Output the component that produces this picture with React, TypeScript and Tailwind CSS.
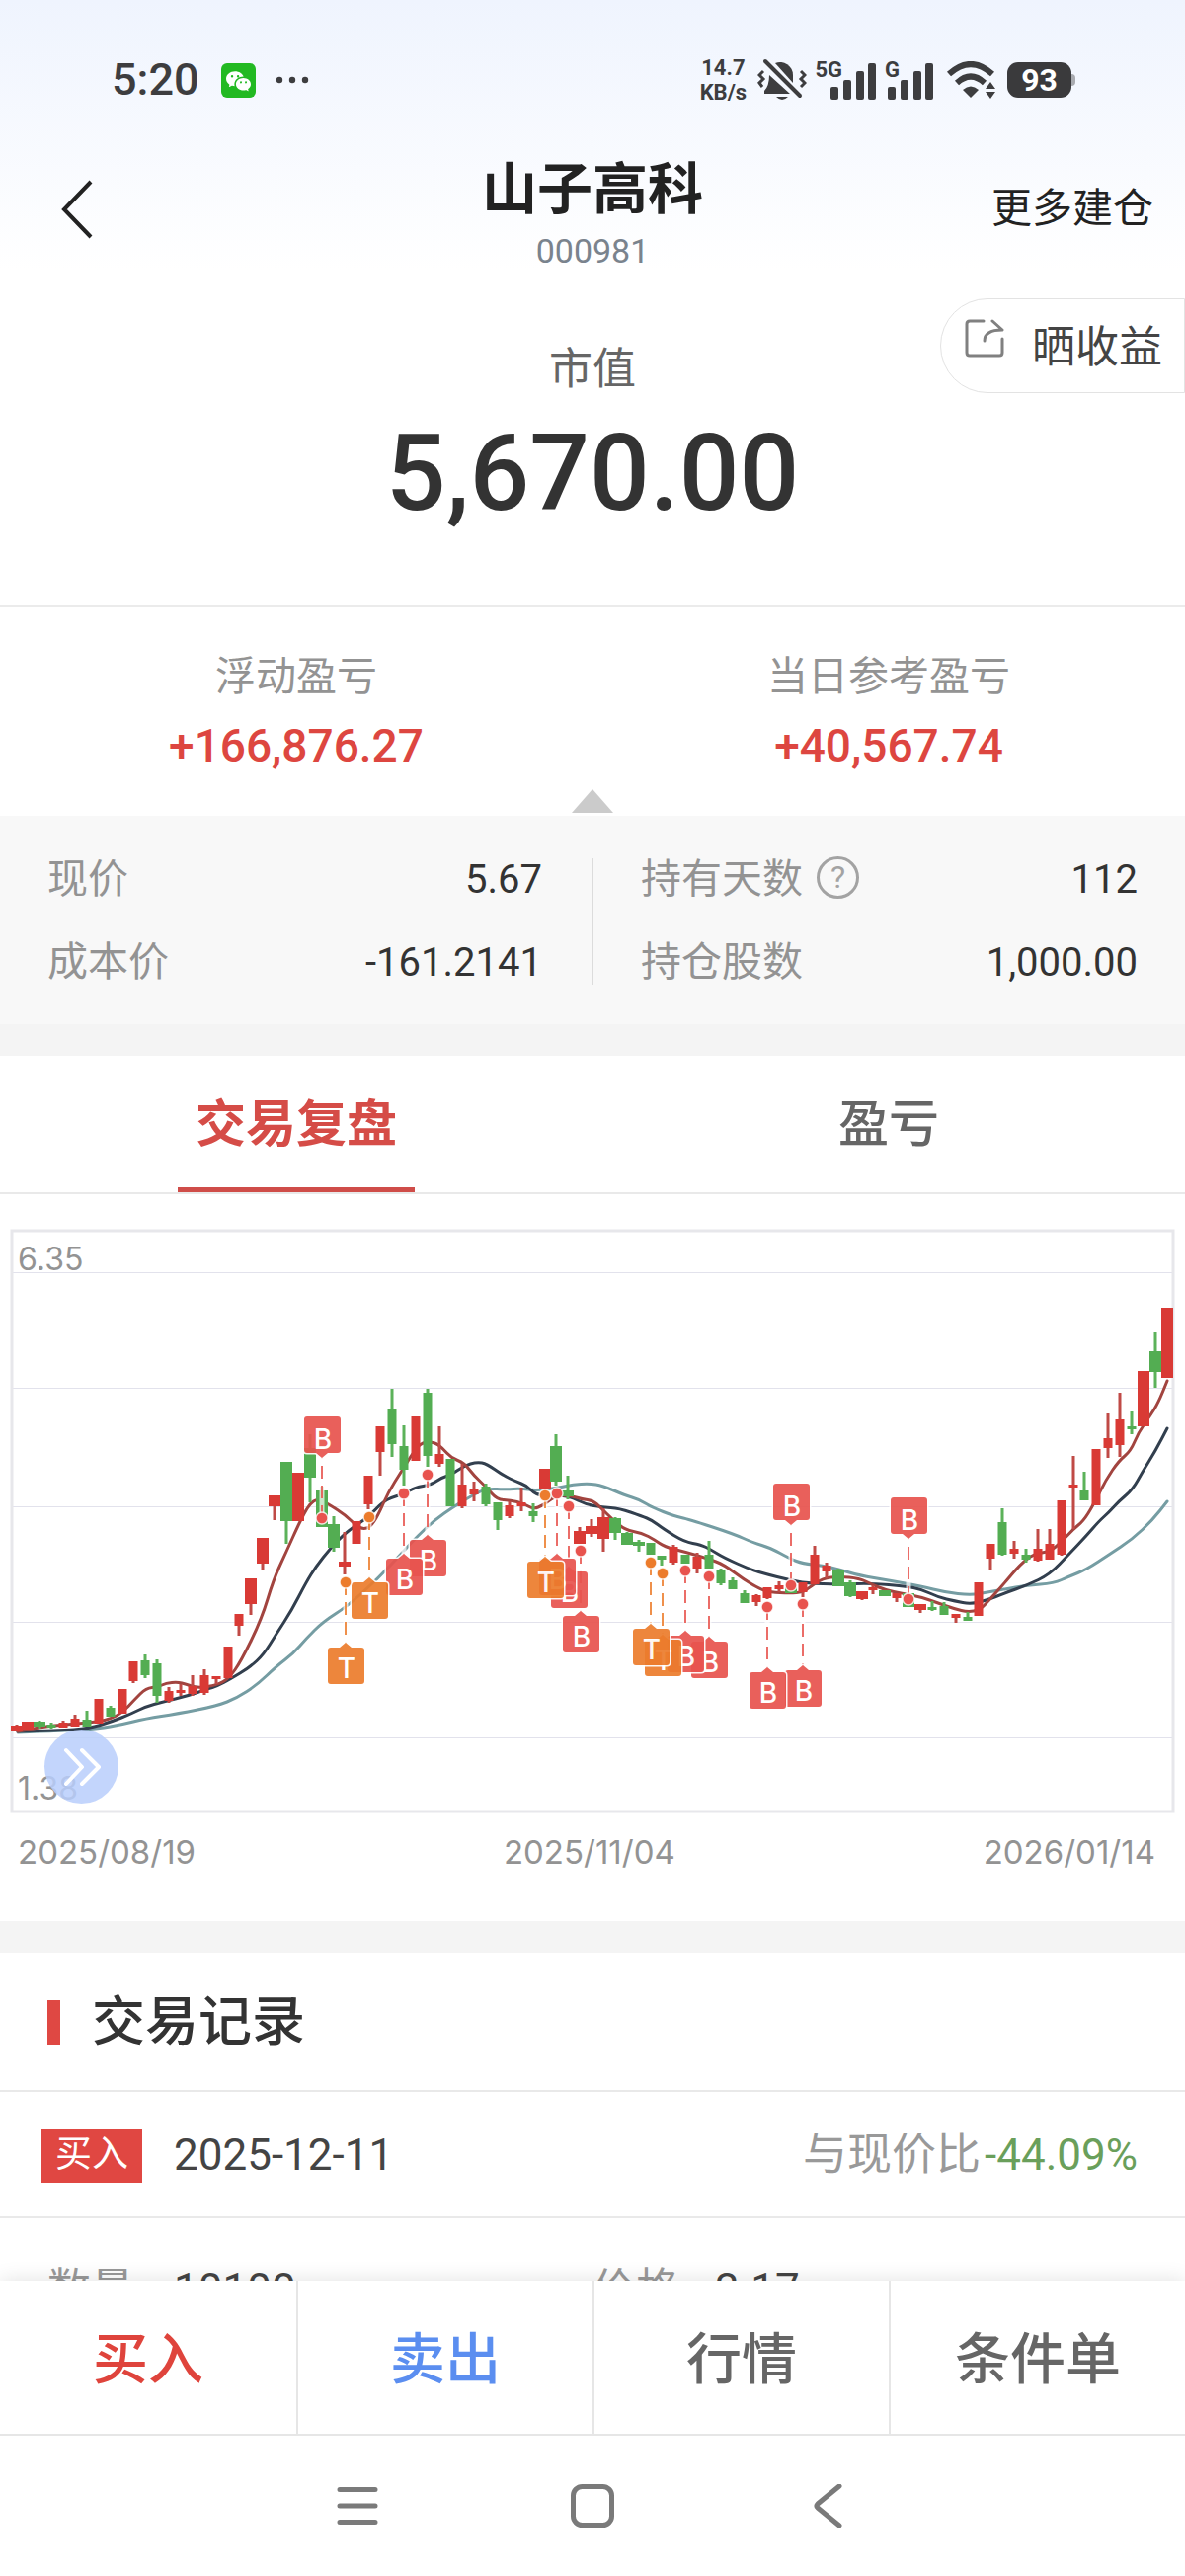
import React, { useState } from 'react'
import clsx from 'clsx'
import { BsWechat } from 'react-icons/bs'

type Color = 'r' | 'g'
// color, high, low, body top, body bottom, wide body
type Candle = [Color, number, number, number, number, 1?]
type Point = [number, number]

const candles: Candle[] = [
  ['r', 1745, 1752, 1746, 1751, 1],
  ['r', 1742, 1750, 1742, 1750, 1],
  ['g', 1741, 1749, 1742, 1747, 1],
  ['g', 1743, 1749, 1745, 1748],
  ['r', 1741, 1748, 1743, 1748],
  ['r', 1735, 1747, 1739, 1747],
  ['g', 1731, 1747, 1740, 1747],
  ['r', 1719, 1744, 1719, 1744],
  ['g', 1726, 1737, 1728, 1737],
  ['r', 1709, 1734, 1709, 1734],
  ['r', 1681, 1703, 1681, 1701],
  ['g', 1674, 1698, 1680, 1695],
  ['g', 1679, 1723, 1683, 1716],
  ['r', 1707, 1723, 1711, 1721],
  ['r', 1704, 1716, 1710, 1713],
  ['r', 1695, 1716, 1706, 1714],
  ['r', 1689, 1715, 1695, 1713],
  ['r', 1696, 1704, 1696, 1699],
  ['r', 1666, 1698, 1666, 1698],
  ['r', 1633, 1655, 1633, 1645],
  ['r', 1597, 1634, 1597, 1623, 1],
  ['r', 1556, 1589, 1556, 1582, 1],
  ['r', 1513, 1538, 1513, 1524, 1],
  ['g', 1479, 1562, 1479, 1539, 1],
  ['r', 1490, 1539, 1490, 1539, 1],
  ['g', 1451, 1520, 1465, 1495, 1],
  ['g', 1504, 1545, 1508, 1545, 1],
  ['g', 1534, 1570, 1542, 1566, 1],
  ['r', 1550, 1593, 1580, 1585, 1],
  ['r', 1539, 1562, 1539, 1562],
  ['r', 1493, 1527, 1493, 1522],
  ['r', 1443, 1493, 1443, 1469],
  ['g', 1405, 1474, 1425, 1461],
  ['g', 1442, 1503, 1463, 1487],
  ['r', 1433, 1478, 1433, 1478],
  ['g', 1405, 1484, 1409, 1473],
  ['r', 1443, 1484, 1471, 1481],
  ['g', 1476, 1524, 1476, 1524],
  ['r', 1481, 1526, 1502, 1524],
  ['r', 1499, 1519, 1506, 1512],
  ['g', 1501, 1524, 1504, 1522],
  ['g', 1520, 1548, 1520, 1538],
  ['r', 1519, 1536, 1523, 1534],
  ['r', 1505, 1529, 1520, 1524],
  ['g', 1521, 1540, 1529, 1534],
  ['r', 1486, 1507, 1486, 1507, 1],
  ['g', 1451, 1503, 1463, 1499, 1],
  ['g', 1493, 1517, 1508, 1514, 1],
  ['r', 1545, 1562, 1549, 1562, 1],
  ['r', 1537, 1555, 1544, 1552, 1],
  ['r', 1526, 1570, 1535, 1557, 1],
  ['g', 1535, 1558, 1536, 1551, 1],
  ['g', 1550, 1563, 1551, 1563, 1],
  ['g', 1558, 1570, 1560, 1564, 1],
  ['g', 1561, 1573, 1561, 1573],
  ['g', 1574, 1584, 1574, 1578],
  ['r', 1563, 1583, 1565, 1581],
  ['g', 1573, 1582, 1573, 1582],
  ['r', 1571, 1592, 1575, 1587],
  ['g', 1559, 1587, 1573, 1587],
  ['g', 1587, 1604, 1588, 1602],
  ['g', 1596, 1608, 1599, 1608],
  ['g', 1609, 1622, 1612, 1622],
  ['r', 1613, 1625, 1614, 1621],
  ['r', 1606, 1618, 1606, 1617],
  ['r', 1600, 1611, 1604, 1608],
  ['g', 1604, 1612, 1606, 1612, 1],
  ['r', 1601, 1616, 1601, 1611],
  ['r', 1564, 1603, 1573, 1603],
  ['r', 1581, 1597, 1584, 1590],
  ['g', 1587, 1605, 1588, 1605, 1],
  ['g', 1599, 1616, 1601, 1615, 1],
  ['r', 1610, 1619, 1610, 1618, 1],
  ['r', 1604, 1613, 1606, 1609],
  ['g', 1609, 1615, 1609, 1615, 1],
  ['r', 1612, 1621, 1612, 1617],
  ['g', 1612, 1626, 1612, 1626, 1],
  ['r', 1623, 1632, 1623, 1629, 1],
  ['g', 1620, 1630, 1626, 1629],
  ['g', 1621, 1634, 1625, 1634],
  ['r', 1633, 1642, 1633, 1637],
  ['g', 1631, 1640, 1636, 1640],
  ['r', 1601, 1635, 1601, 1635],
  ['r', 1562, 1588, 1562, 1577],
  ['g', 1526, 1574, 1540, 1573],
  ['r', 1559, 1577, 1567, 1572],
  ['g', 1567, 1581, 1573, 1578],
  ['r', 1547, 1580, 1567, 1579],
  ['r', 1547, 1578, 1562, 1578],
  ['r', 1518, 1574, 1518, 1573],
  ['r', 1473, 1547, 1502, 1505],
  ['g', 1489, 1518, 1508, 1518],
  ['r', 1466, 1523, 1466, 1523],
  ['r', 1430, 1475, 1455, 1465],
  ['r', 1409, 1474, 1436, 1462],
  ['g', 1428, 1451, 1443, 1446],
  ['r', 1387, 1443, 1387, 1443, 1],
  ['g', 1348, 1404, 1367, 1388, 1],
  ['r', 1323, 1394, 1323, 1394, 1],
]

const ma5: Point[] = [
  [18, 1752], [43, 1747], [67, 1745], [100, 1742], [112, 1739], [124, 1733],
  [136, 1720], [148, 1708], [160, 1707], [168, 1703], [180, 1702], [188, 1704],
  [200, 1708], [220, 1705], [232, 1698], [244, 1681], [265, 1638], [277, 1598],
  [290, 1570], [303, 1541], [313, 1522], [322, 1516], [333, 1522], [350, 1533],
  [361, 1544], [368, 1547], [375, 1545], [383, 1533], [393, 1510], [407, 1488],
  [420, 1467], [428, 1459], [440, 1459], [448, 1465], [457, 1475], [470, 1480],
  [480, 1493], [493, 1505], [503, 1517], [517, 1518], [530, 1521], [540, 1527],
  [550, 1523], [563, 1513], [577, 1513], [590, 1517], [600, 1518], [608, 1525],
  [620, 1537], [633, 1548], [650, 1551], [663, 1558], [673, 1565], [693, 1570],
  [717, 1577], [733, 1583], [753, 1598], [770, 1608], [780, 1611], [800, 1612],
  [813, 1611], [820, 1606], [833, 1597], [850, 1595], [870, 1597], [883, 1603],
  [897, 1609], [913, 1612], [933, 1616], [950, 1622], [967, 1628], [980, 1631],
  [992, 1629], [1000, 1621], [1017, 1602], [1033, 1583], [1047, 1572],
  [1063, 1570], [1075, 1560], [1087, 1547], [1097, 1539], [1107, 1523],
  [1120, 1497], [1133, 1478], [1145, 1468], [1153, 1449], [1165, 1432],
  [1173, 1419], [1182, 1397],
]

const ma10: Point[] = [
  [18, 1752], [60, 1751], [90, 1749], [113, 1742], [133, 1734], [147, 1727],
  [165, 1722], [190, 1716], [210, 1709], [220, 1706], [233, 1699], [253, 1687],
  [267, 1674], [280, 1653], [295, 1630], [310, 1601], [320, 1585], [335, 1566],
  [350, 1551], [361, 1543], [374, 1534], [387, 1520], [397, 1515], [410, 1511],
  [420, 1505], [437, 1502], [447, 1495], [457, 1492], [470, 1483], [483, 1479],
  [493, 1481], [510, 1493], [523, 1499], [533, 1503], [540, 1510], [547, 1513],
  [563, 1513], [577, 1514], [593, 1522], [610, 1525], [627, 1526], [650, 1534],
  [660, 1538], [672, 1547], [693, 1560], [710, 1563], [720, 1568], [733, 1576],
  [760, 1588], [777, 1593], [797, 1598], [817, 1602], [850, 1603], [883, 1602],
  [917, 1605], [933, 1608], [950, 1616], [967, 1620], [983, 1623], [1000, 1619],
  [1017, 1612], [1040, 1604], [1063, 1593], [1083, 1572], [1100, 1554],
  [1113, 1539], [1123, 1530], [1133, 1519], [1147, 1507], [1157, 1489],
  [1170, 1468], [1182, 1445],
]

const ma20: Point[] = [
  [18, 1753], [67, 1751], [100, 1749], [123, 1745], [147, 1739], [180, 1734],
  [220, 1726], [240, 1718], [260, 1705], [280, 1686], [297, 1673], [310, 1658],
  [327, 1641], [352, 1625], [383, 1597], [410, 1568], [423, 1554], [440, 1538],
  [460, 1524], [480, 1512], [493, 1506], [513, 1507], [527, 1506], [543, 1508],
  [567, 1505], [580, 1502], [597, 1501], [610, 1503], [633, 1513], [647, 1517],
  [660, 1525], [683, 1534], [697, 1537], [743, 1552], [763, 1561], [780, 1566],
  [800, 1577], [813, 1582], [833, 1584], [850, 1588], [870, 1594], [900, 1599],
  [933, 1605], [957, 1611], [983, 1614], [1000, 1611], [1017, 1608],
  [1040, 1604], [1067, 1602], [1083, 1595], [1100, 1588], [1123, 1573],
  [1147, 1557], [1167, 1538], [1182, 1519],
]

// side: where the tag sits relative to its price dot
const marks: { type: 'B' | 'T'; x: number; dot: number; box: number; side: 'above' | 'below' }[] = [
  { type: 'B', x: 326, dot: 1536, box: 1433, side: 'above' },
  { type: 'T', x: 350, dot: 1601, box: 1667, side: 'below' },
  { type: 'T', x: 374, dot: 1535, box: 1601, side: 'below' },
  { type: 'B', x: 409, dot: 1511, box: 1577, side: 'below' },
  { type: 'B', x: 433, dot: 1492, box: 1558, side: 'below' },
  { type: 'T', x: 552, dot: 1513, box: 1580, side: 'below' },
  { type: 'B', x: 564, dot: 1511, box: 1577, side: 'below' },
  { type: 'B', x: 576, dot: 1524, box: 1590, side: 'below' },
  { type: 'B', x: 588, dot: 1569, box: 1635, side: 'below' },
  { type: 'T', x: 659, dot: 1581, box: 1648, side: 'below' },
  { type: 'T', x: 671, dot: 1592, box: 1659, side: 'below' },
  { type: 'B', x: 694, dot: 1589, box: 1655, side: 'below' },
  { type: 'B', x: 718, dot: 1595, box: 1661, side: 'below' },
  { type: 'B', x: 777, dot: 1626, box: 1692, side: 'below' },
  { type: 'B', x: 801, dot: 1604, box: 1501, side: 'above' },
  { type: 'B', x: 813, dot: 1623, box: 1690, side: 'below' },
  { type: 'B', x: 920, dot: 1618, box: 1515, side: 'above' },
]

const candleX = (i: number) => Math.round(16.5 + i * 11.89)
const fill = { r: '#d93a35', g: '#53ad52' }
const stroke = { r: '#c04a46', g: '#5cb25a' }

const smooth = (points: Point[]) => {
  const last = points[points.length - 1]
  const mid = points.slice(1, -1).map(([x, y], i) => {
    const next = points[i + 2]
    return `Q${x} ${y} ${(x + next[0]) / 2} ${(y + next[1]) / 2}`
  })
  return `M${points[0][0]} ${points[0][1]} ${mid.join(' ')} L${last[0]} ${last[1]}`
}

const KLineChart = () => (
  <svg viewBox="0 1208 1200 640" className="block w-full" role="img" aria-label="K线">
    {[1287, 1404, 1524, 1641, 1758].map((y) => (
      <line key={y} x1="12" x2="1188" y1={y + 0.5} y2={y + 0.5} stroke="#e2e2ec" />
    ))}
    <rect x="12" y="1245" width="1176" height="588" fill="none" stroke="#e7e7eb" strokeWidth="3" />
    <g fontFamily="Inter, sans-serif" fontSize="32" fill="#939393">
      <text x="18" y="1285">6.35</text>
      <text x="18" y="1821">1.38</text>
    </g>
    <g fill="none" strokeWidth="3" strokeLinecap="round">
      <path d={smooth(ma20)} stroke="#759da3" />
      <path d={smooth(ma10)} stroke="#323f4e" />
      <path d={smooth(ma5)} stroke="#a2443f" />
    </g>
    {candles.map(([c, high, low, top, bottom, wide], i) => {
      const x = candleX(i)
      const w = wide ? 12 : 9
      return (
        <g key={i}>
          <rect x={x - 1.5} y={high} width="3" height={low - high} fill={stroke[c]} />
          <rect x={x - w / 2} y={top} width={w} height={bottom - top} fill={fill[c]} />
        </g>
      )
    })}
    {[...marks].reverse().map(({ type, x, dot, box, side }) => {
      const color = type === 'B' ? '#e8534e' : '#ec7c2c'
      const below = side === 'below'
      const edge = below ? box - 4 : box + 42
      const base = below ? box : box + 37
      return (
        <g key={x}>
          <line x1={x} x2={x} y1={dot} y2={edge} stroke="#fff" strokeOpacity="0.7" strokeWidth="5" />
          <line
            x1={x}
            x2={x}
            y1={dot}
            y2={edge}
            stroke={color}
            strokeOpacity="0.85"
            strokeWidth="2"
            strokeDasharray="13 7"
          />
          <g opacity="0.92">
            <path
              d={`M${x - 15} ${box}H${x - 6}${below ? `L${x} ${box - 5}L${x + 6} ${box}` : ''}H${x + 16}q3 0 3 3V${box + 34}q0 3 -3 3H${x + 6}${
                below ? '' : `L${x} ${base + 5}L${x - 6} ${base}`
              }H${x - 15}q-3 0 -3 -3V${box + 3}q0 -3 3 -3Z`}
              fill={color}
              stroke="#fff"
              strokeWidth="3"
              paintOrder="stroke"
            />
            <text
              x={x + 1}
              y={below ? box + 31 : box + 33}
              fontFamily="Inter, sans-serif"
              fontSize="28"
              fontWeight="500"
              fill="#fff"
              textAnchor="middle"
            >
              {type}
            </text>
          </g>
          <circle cx={x} cy={dot} r="6" fill={color} stroke="#fff" strokeOpacity="0.8" strokeWidth="1.5" />
        </g>
      )
    })}
  </svg>
)

const Signal = ({ label }: { label: string }) => (
  <div className="flex h-10 items-end">
    <span className="self-start text-[22px] leading-5 font-bold">{label}</span>
    <svg viewBox="0 0 47 37" className="-ml-3 h-[37px] w-[47px] fill-current">
      <rect x="0" y="24" width="8" height="13" rx="2" />
      <rect x="13" y="17" width="8" height="20" rx="2" />
      <rect x="26" y="8" width="8" height="29" rx="2" />
      <rect x="38" y="0" width="8" height="37" rx="2" />
    </svg>
  </div>
)

const StatusBar = () => (
  <div className="flex h-[162px] items-center justify-between pr-[111px] pl-[113px] text-[#3d3d3f]">
    <div className="flex items-center">
      <span className="text-[45px] font-medium">5:20</span>
      <span className="ml-[22px] flex h-[35px] w-[35px] items-center justify-center rounded-md bg-[#22b922] text-white">
        <BsWechat className="h-[25px] w-[25px]" />
      </span>
      <svg viewBox="0 0 34 8" className="ml-5 h-2 w-[34px] fill-current">
        <circle cx="4" cy="4" r="3.2" />
        <circle cx="17" cy="4" r="3.2" />
        <circle cx="30" cy="4" r="3.2" />
      </svg>
    </div>
    <div className="flex items-center">
      <div className="w-[50px] text-center text-[22px] leading-[25px] font-bold">
        <div>14.7</div>
        <div>KB/s</div>
      </div>
      <svg viewBox="0 0 50 44" className="mr-2 ml-2.5 h-11 w-[50px] fill-current">
        <path d="M18 5a13 13 0 0 1 18 12v8Z" />
        <path d="M12 17 33 36H7v-3q5-5 5-16Z" />
        <path d="M19 39h12q-6 6-12 0Z" />
        <path d="M8 3 43 38" stroke="currentColor" strokeWidth="4" strokeLinecap="round" />
        <path
          d="M6 13l-4 4 4 4-4 4 3 4M44 13l4 4-4 4 4 4-4 4"
          fill="none"
          stroke="currentColor"
          strokeWidth="3"
        />
      </svg>
      <Signal label="5G" />
      <div className="ml-2">
        <Signal label="G" />
      </div>
      <svg viewBox="0 0 52 38" className="ml-3 h-[38px] w-[52px] fill-current">
        <g fill="none" stroke="currentColor" strokeWidth="6">
          <path d="M3 13Q25-7 47 13" />
          <path d="M11 22Q25 9 39 22" />
        </g>
        <path d="M17 29Q25 22 33 29L25 37Z" />
        <path d="M40 28l5-7 5 7ZM40 31h10l-5 7Z" />
      </svg>
      <span className="ml-2.5 flex h-9 w-[65px] items-center justify-center rounded-[11px] bg-[#3a3a3c] text-[32px] font-bold text-white">
        93
      </span>
      <span className="h-3 w-1 rounded-r bg-[#a9abb0]" />
    </div>
  </div>
)

const Header = () => (
  <header className="grid grid-cols-[1fr_auto_1fr] items-start">
    <button aria-label="返回" className="flex h-[100px] items-center pl-[60px]">
      <svg viewBox="0 0 36 60" className="h-[60px] w-9" fill="none" stroke="#222" strokeWidth="4">
        <path d="M32 2 5 30l27 28" />
      </svg>
    </button>
    <div className="text-center">
      <h1 className="text-[56px] leading-[60px] font-bold text-[#222]">山子高科</h1>
      <p className="mt-3 text-[34px] leading-10 text-[#7a838d]">000981</p>
    </div>
    <button className="flex h-[100px] items-center justify-end pr-8 text-[41px] text-[#222]">更多建仓</button>
  </header>
)

const MarketValue = () => (
  <section className="relative border-b-2 border-[#ebebeb] pt-[78px] pb-[83px] text-center">
    <h2 className="text-[44px] leading-[44px] text-[#666]">市值</h2>
    <p className="mt-[34px] text-[107px] leading-[100px] font-medium text-[#333]">5,670.00</p>
    <button className="absolute top-7 right-0 flex h-24 items-center rounded-l-full border border-[#e3e3e3] bg-white pt-1 pr-[22px] pl-6 text-[44px] text-[#444]">
      <svg
        viewBox="0 0 40 40"
        className="mr-7 mb-5 h-10 w-10"
        fill="none"
        stroke="#808080"
        strokeWidth="3"
        strokeLinecap="round"
        strokeLinejoin="round"
      >
        <path d="M19 3H5Q2 3 2 6V35q0 3 3 3H35q3 0 3-3V21" />
        <path d="M28 3 38 12Q20 12 20 23" />
      </svg>
      晒收益
    </button>
  </section>
)

const Summary = () => (
  <section className="relative grid grid-cols-2 pt-[45px] pb-[46px] text-center">
    {[
      ['浮动盈亏', '+166,876.27'],
      ['当日参考盈亏', '+40,567.74'],
    ].map(([label, value]) => (
      <div key={label}>
        <h3 className="text-[41px] leading-[50px] text-[#939393]">{label}</h3>
        <p className="mt-5 text-[46px] leading-[50px] font-medium text-[#dd4640]">{value}</p>
      </div>
    ))}
    <svg viewBox="0 0 42 24" className="absolute bottom-[3px] left-1/2 h-6 w-[42px] -translate-x-1/2 fill-[#cbcbcb]">
      <path d="M21 0 42 24H0Z" />
    </svg>
  </section>
)

const StatRow = ({ label, value, help }: { label: string; value: string; help?: boolean }) => (
  <div className="flex h-[60px] items-center justify-between text-[40px]">
    <dt className="flex items-center text-[41px] text-[#939393]">
      {label}
      {help && (
        <button
          aria-label="持有天数说明"
          className="mb-1.5 ml-3.5 flex h-[43px] w-[43px] items-center justify-center rounded-full border-3 border-[#a3a3a3] text-[32px] text-[#a3a3a3]"
        >
          ?
        </button>
      )}
    </dt>
    <dd className="text-[#333]">{value}</dd>
  </div>
)

const Stats = () => (
  <section className="grid grid-cols-[1fr_2px_1fr] border-b-32 border-[#f4f4f4] bg-[#f8f8f8] pt-[35px] pb-8">
    <dl className="flex flex-col gap-6 pr-[50px] pl-12">
      <StatRow label="现价" value="5.67" />
      <StatRow label="成本价" value="-161.2141" />
    </dl>
    <div className="my-2 bg-[#dcdcdc]" />
    <dl className="flex flex-col gap-6 pr-12 pl-12">
      <StatRow label="持有天数" value="112" help />
      <StatRow label="持仓股数" value="1,000.00" />
    </dl>
  </section>
)

const Tabs = () => {
  const [active, setActive] = useState('交易复盘')
  return (
    <div role="tablist" className="grid h-[140px] grid-cols-2 border-b-2 border-[#e9e9e9]">
      {['交易复盘', '盈亏'].map((tab) => (
        <button
          key={tab}
          role="tab"
          aria-selected={tab === active}
          onClick={() => setActive(tab)}
          className={clsx(
            'flex flex-col items-center text-[51px]',
            tab === active ? 'font-bold text-[#d54c47]' : 'font-medium text-[#666]'
          )}
        >
          <span className="flex flex-1 items-center pt-2">{tab}</span>
          <span className={clsx('h-[5px] w-60', tab === active && 'bg-[#cf4d49]')} />
        </button>
      ))}
    </div>
  )
}

const Records = () => (
  <section>
    <h2 className="flex h-[141px] items-center border-b-2 border-[#e9e9e9] pt-0.5 pl-12 text-[54px] font-medium text-[#333]">
      <span className="mr-8 h-[45px] w-[13px] bg-[#df4843]" />
      交易记录
    </h2>
    <div className="flex h-32 items-center border-b-2 border-[#e9e9e9] pt-0.5 pr-12 pl-[42px] text-[44px]">
      <span className="flex h-[55px] w-[102px] items-center justify-center bg-[#e04742] text-[37px] text-white">
        买入
      </span>
      <time className="ml-8 text-[#444]">2025-12-11</time>
      <span className="ml-auto flex items-center gap-1 text-[#999]">
        <span className="text-[45px]">与现价比</span>
        <span className="text-[#6a9f5b]">-44.09%</span>
      </span>
    </div>
    <dl className="grid h-36 grid-cols-2 items-center text-[44px]">
      <div className="flex pl-12">
        <dt className="mr-10 text-[#999]">数量</dt>
        <dd className="text-[#444]">10100</dd>
      </div>
      <div className="flex">
        <dt className="mr-9 text-[#999]">价格</dt>
        <dd className="text-[#444]">3.17</dd>
      </div>
    </dl>
  </section>
)

const actions = [
  { name: '买入', color: 'text-[#df443c]' },
  { name: '卖出', color: 'text-[#5b8ef0]' },
  { name: '行情', color: 'text-[#666]' },
  { name: '条件单', color: 'text-[#666]' },
]

const ActionBar = () => (
  <div className="relative grid h-[157px] shrink-0 grid-cols-4 border-b-2 border-[#e6e6e6] bg-white shadow-[0_0_20px_rgba(0,0,0,0.12)]">
    {actions.map(({ name, color }) => (
      <button key={name} className={clsx('border-[#e6e6e6] pt-1 text-[56px] font-medium not-first:border-l-2', color)}>
        {name}
      </button>
    ))}
  </div>
)

const SystemNav = () => (
  <nav className="relative flex h-[142px] shrink-0 items-center justify-center gap-[194px] bg-white text-[#7a7a7a]">
    <button aria-label="最近任务">
      <svg viewBox="0 0 44 44" className="h-11 w-11" stroke="currentColor" strokeWidth="5" strokeLinecap="round">
        <path d="M4 5.500H40M4 22H40M4 38.500H40" />
      </svg>
    </button>
    <button aria-label="主屏幕">
      <svg viewBox="0 0 44 44" className="h-11 w-11" fill="none" stroke="currentColor" strokeWidth="5">
        <rect x="2.500" y="2.500" width="39" height="39" rx="9" />
      </svg>
    </button>
    <button aria-label="返回上一页">
      <svg
        viewBox="0 0 44 44"
        className="h-11 w-11"
        fill="none"
        stroke="currentColor"
        strokeWidth="5"
        strokeLinecap="round"
        strokeLinejoin="round"
      >
        <path d="M34 2 12 20q-2 2 0 4L34 42" />
      </svg>
    </button>
  </nav>
)

export default function App() {
  return (
    <div className="flex h-screen flex-col bg-white font-['Roboto','Noto_Sans_CJK_SC',sans-serif]">
      <main className="min-h-0 flex-1 overflow-y-auto [scrollbar-width:none]">
        <div className="bg-linear-to-b from-[#eff4fe] to-white">
          <StatusBar />
          <Header />
        </div>
        <MarketValue />
        <Summary />
        <Stats />
        <Tabs />
        <section className="relative border-b-32 border-[#f4f4f4]">
          <KLineChart />
          <button
            aria-label="展开"
            className="absolute bottom-[119px] left-[45px] flex h-[75px] w-[75px] items-center justify-center rounded-full bg-[#b8cefb]/85"
          >
            <svg
              viewBox="0 0 40 40"
              className="h-10 w-10"
              fill="none"
              stroke="#fff"
              strokeWidth="4"
              strokeLinecap="round"
              strokeLinejoin="round"
            >
              <path d="M4 3 20 20 4 37M20 3 37 20 20 37" />
            </svg>
          </button>
          <div className="flex justify-between px-[18px] pt-1.5 pr-[30px] pb-[50px] font-['Inter',sans-serif] text-[33px] leading-10 text-[#939393]">
            <time>2025/08/19</time>
            <time>2025/11/04</time>
            <time>2026/01/14</time>
          </div>
        </section>
        <Records />
      </main>
      <ActionBar />
      <SystemNav />
    </div>
  )
}
